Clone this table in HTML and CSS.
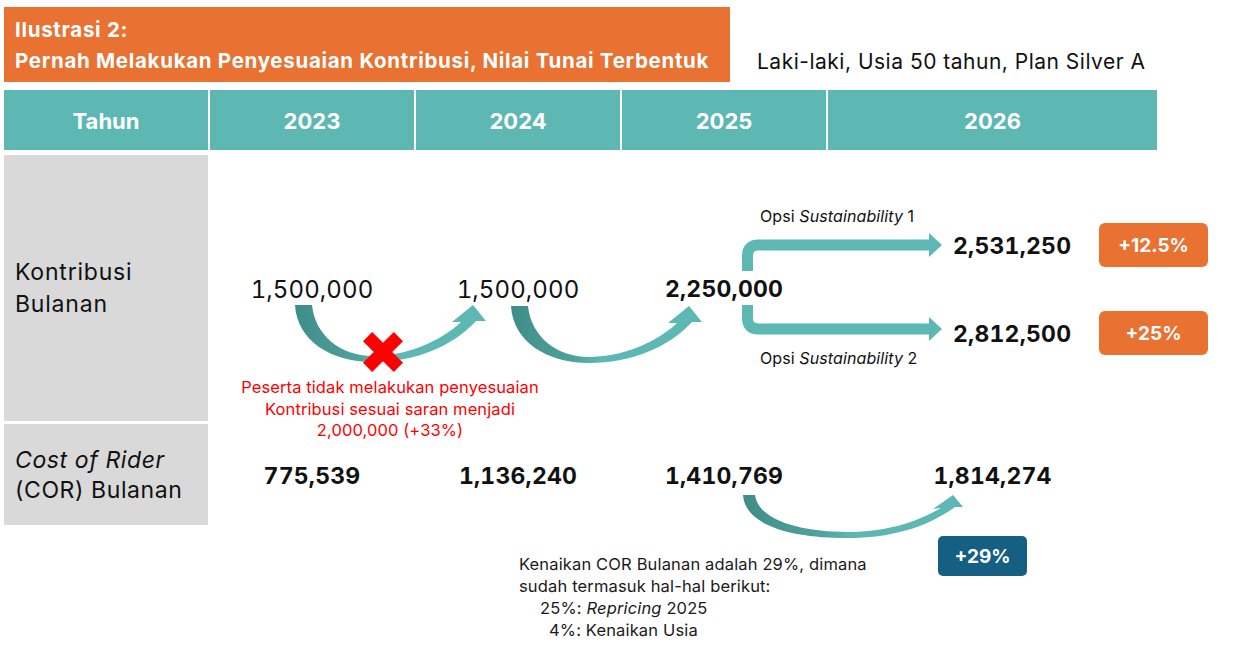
FILE: index.html
```html
<!DOCTYPE html>
<html lang="id">
<head>
<meta charset="utf-8">
<title>Ilustrasi 2</title>
<link rel="stylesheet" href="styles.css">
</head>
<body>
<div class="page">
  <div class="top">
    <div class="title-box">
      <div>Ilustrasi 2:</div>
      <div>Pernah Melakukan Penyesuaian Kontribusi, Nilai Tunai Terbentuk</div>
    </div>
    <div class="subtitle">Laki-laki, Usia 50 tahun, Plan Silver A</div>
  </div>

  <div class="header">
    <div class="hcell">Tahun</div>
    <div class="hcell">2023</div>
    <div class="hcell">2024</div>
    <div class="hcell">2025</div>
    <div class="hcell">2026</div>
  </div>

  <div class="grid">
    <div class="label label-k"><div>Kontribusi<br>Bulanan</div></div>
    <div class="val">1,500,000</div>
    <div class="val">1,500,000</div>
    <div class="val bold">2,250,000</div>
    <div class="options">
      <div class="opsi">Opsi <i>Sustainability</i> 1</div>
      <div class="orow orow1"><span class="oval">2,531,250</span><span class="badge">+12.5%</span></div>
      <div class="orow orow2"><span class="oval">2,812,500</span><span class="badge">+25%</span></div>
      <div class="opsi opsi2">Opsi <i>Sustainability</i> 2</div>
    </div>

    <div class="label label-c"><div><i>Cost of Rider</i><br>(COR) Bulanan</div></div>
    <div class="val bold">775,539</div>
    <div class="val bold">1,136,240</div>
    <div class="val bold">1,410,769</div>
    <div class="val bold">1,814,274</div>

    <div class="warn">Peserta tidak melakukan penyesuaian<br>Kontribusi sesuai saran menjadi<br>2,000,000 (+33%)</div>
  </div>

  <div class="footer">
    <div class="note">
      <div>Kenaikan COR Bulanan adalah 29%, dimana</div>
      <div>sudah termasuk hal-hal berikut:</div>
      <div class="ind1">25%: <i>Repricing</i> 2025</div>
      <div class="ind2">4%: Kenaikan Usia</div>
    </div>
    <div class="badge-blue">+29%</div>
  </div>
</div>

<svg class="arrows" width="1234" height="666" viewBox="0 0 1234 666" aria-hidden="true">
  <defs>
    <linearGradient id="g1" gradientUnits="userSpaceOnUse" x1="295" y1="0" x2="475" y2="0">
      <stop offset="0" stop-color="#3f8d89"/>
      <stop offset="0.35" stop-color="#4fa29d"/>
      <stop offset="0.5" stop-color="#5db8b3"/>
      <stop offset="1" stop-color="#5db8b3"/>
    </linearGradient>
    <linearGradient id="g3" gradientUnits="userSpaceOnUse" x1="743" y1="0" x2="963" y2="0">
      <stop offset="0" stop-color="#3f8d89"/>
      <stop offset="0.35" stop-color="#4fa29d"/>
      <stop offset="0.5" stop-color="#5db8b3"/>
      <stop offset="1" stop-color="#5db8b3"/>
    </linearGradient>
  </defs>
  <path fill="url(#g1)" d="M295,305 L312,305 C315,335 340,356 373,356 C405,356 440,342 461,322 L452,322 L473,305 L486,321 L476,321 C452,347 414,362 373,362 C330,362 297,340 295,305 Z"/>
  <g transform="translate(216,1)">
    <path fill="url(#g1)" d="M295,305 L312,305 C315,335 340,356 373,356 C405,356 440,342 461,322 L452,322 L473,305 L486,321 L476,321 C452,347 414,362 373,362 C330,362 297,340 295,305 Z"/>
  </g>
  <g stroke="#ff0000" stroke-width="13" stroke-linecap="butt">
    <line x1="367.6" y1="336.6" x2="398.4" y2="367.4"/>
    <line x1="398.4" y1="336.6" x2="367.6" y2="367.4"/>
  </g>
  <g fill="none" stroke="#5db8b3" stroke-width="11">
    <path d="M747.5,271 L747.5,256 Q747.5,245 758.5,245 L931,245"/>
    <path d="M747.5,305 L747.5,318 Q747.5,329 758.5,329 L931,329"/>
  </g>
  <g fill="#5db8b3">
    <polygon points="929,233 942,245 929,257"/>
    <polygon points="929,317 942,329 929,341"/>
  </g>
  <path fill="url(#g3)" d="M743,495 L755,495 C758,520 800,532 848,532 C885,532 915,523 941,508 L933,509 L953,495 L963,507 L955,507 C926,528 890,538 848,538 C790,538 745,525 743,495 Z"/>
</svg>
</body>
</html>
```

FILE: styles.css
```css
html, body {
  margin: 0;
  padding: 0;
  background: #ffffff;
}
body {
  font-family: "Inter", "Noto Sans", "Liberation Sans", sans-serif;
  color: #111111;
  width: 1234px;
  height: 666px;
  overflow: hidden;
  position: relative;
}
.page {
  padding: 7px 0 0 4px;
}
.top {
  display: flex;
  align-items: flex-end;
}
.title-box {
  width: 715px;
  height: 68px;
  background: #e97132;
  color: #ffffff;
  font-weight: 700;
  font-size: 20.5px;
  letter-spacing: 0.7px;
  line-height: 31px;
  padding: 7px 0 0 11px;
  white-space: nowrap;
}
.subtitle {
  margin-left: 27px;
  margin-bottom: 8px;
  font-size: 21px;
  letter-spacing: 0.5px;
  line-height: 24px;
  color: #111111;
  white-space: nowrap;
}
.header {
  margin-top: 8px;
  display: grid;
  grid-template-columns: 204px 204px 204px 204px 329px;
  column-gap: 2px;
  height: 60px;
}
.hcell {
  background: #5db8b3;
  color: #ffffff;
  font-weight: 700;
  font-size: 22px;
  display: flex;
  align-items: center;
  justify-content: center;
  padding-top: 2px;
  box-sizing: border-box;
}
.grid {
  position: relative;
  margin-top: 5px;
  display: grid;
  grid-template-columns: 204px 204px 204px 204px 329px;
  grid-template-rows: 266px 101px;
  column-gap: 2px;
  row-gap: 3px;
}
.label {
  background: #d9d9d9;
  display: flex;
  align-items: center;
  padding-left: 11px;
  font-size: 23px;
  letter-spacing: 0.8px;
  color: #111111;
}
.label-k {
  line-height: 32px;
}
.label-c {
  line-height: 30px;
  padding-top: 1px;
  letter-spacing: 0.6px;
}
.val {
  display: flex;
  align-items: center;
  justify-content: center;
  font-size: 24px;
  letter-spacing: 0.1px;
  font-variant-numeric: tabular-nums;
  color: #111111;
  padding-top: 2px;
}
.val.bold {
  font-weight: 700;
  font-size: 23px;
  letter-spacing: 0.2px;
}
.options {
  display: flex;
  flex-direction: column;
  padding-top: 51px;
}
.opsi {
  margin-left: -68px;
  font-size: 16px;
  letter-spacing: 0.1px;
  line-height: 20px;
  height: 20px;
  color: #111111;
  white-space: nowrap;
}
.opsi2 {
  margin-top: -7px;
}
.orow {
  display: flex;
  align-items: center;
  height: 44px;
  padding-left: 125px;
}
.orow1 {
  margin-top: -3px;
}
.orow2 {
  margin-top: 44px;
}
.oval {
  flex: none;
  width: 146px;
  font-weight: 700;
  font-size: 23px;
  letter-spacing: 0.2px;
  font-variant-numeric: tabular-nums;
  color: #111111;
  padding-top: 1px;
}
.badge {
  flex: none;
  width: 109px;
  height: 44px;
  border-radius: 6px;
  background: #e97132;
  color: #ffffff;
  font-weight: 700;
  font-size: 19px;
  display: flex;
  align-items: center;
  justify-content: center;
}
.warn {
  position: absolute;
  left: 236px;
  top: 222px;
  width: 300px;
  text-align: center;
  color: #ff0000;
  font-size: 16.5px;
  letter-spacing: 0.1px;
  line-height: 21.5px;
  white-space: nowrap;
}
.footer {
  display: flex;
  align-items: flex-start;
  padding-left: 515px;
}
.note {
  width: 419px;
  margin-top: 28px;
  font-size: 16.5px;
  letter-spacing: 0.15px;
  line-height: 22px;
  color: #1a1a1a;
  white-space: nowrap;
}
.ind1 {
  padding-left: 21px;
}
.ind2 {
  padding-left: 30px;
}
.badge-blue {
  margin-top: 11px;
  width: 89px;
  height: 40px;
  border-radius: 5px;
  background: #156082;
  color: #ffffff;
  font-weight: 700;
  font-size: 19px;
  display: flex;
  align-items: center;
  justify-content: center;
}
.arrows {
  position: absolute;
  top: 0;
  left: 0;
  pointer-events: none;
}
```
